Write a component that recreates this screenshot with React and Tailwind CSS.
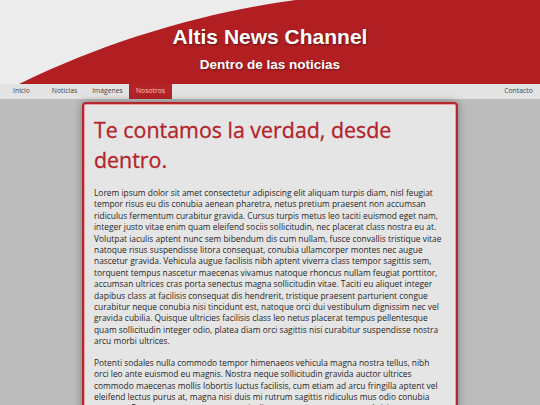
import React from "react";

const navItems = ["Inicio", "Noticias", "Imágenes", "Nosotros"];

const paragraphs = [
  "Lorem ipsum dolor sit amet consectetur adipiscing elit aliquam turpis diam, nisl feugiat tempor risus eu dis conubia aenean pharetra, netus pretium praesent non accumsan ridiculus fermentum curabitur gravida. Cursus turpis metus leo taciti euismod eget nam, integer justo vitae enim quam eleifend sociis sollicitudin, nec placerat class nostra eu at. Volutpat iaculis aptent nunc sem bibendum dis cum nullam, fusce convallis tristique vitae natoque risus suspendisse litora consequat, conubia ullamcorper montes nec augue nascetur gravida. Vehicula augue facilisis nibh aptent viverra class tempor sagittis sem, torquent tempus nascetur maecenas vivamus natoque rhoncus nullam feugiat porttitor, accumsan ultrices cras porta senectus magna sollicitudin vitae. Taciti eu aliquet integer dapibus class at facilisis consequat dis hendrerit, tristique praesent parturient congue curabitur neque conubia nisi tincidunt est, natoque orci dui vestibulum dignissim nec vel gravida cubilia. Quisque ultricies facilisis class leo netus placerat tempus pellentesque quam sollicitudin integer odio, platea diam orci sagittis nisi curabitur suspendisse nostra arcu morbi ultrices.",
  "Potenti sodales nulla commodo tempor himenaeos vehicula magna nostra tellus, nibh orci leo ante euismod eu magnis. Nostra neque sollicitudin gravida auctor ultrices commodo maecenas mollis lobortis luctus facilisis, cum etiam ad arcu fringilla aptent vel eleifend lectus purus at, magna nisi duis mi rutrum sagittis ridiculus mus odio conubia natoque. Fusce nec curae posuere mattis dictum montes aenean cras ultricies tempus, faucibus lacinia porta semper.",
];

const Header = () => {
  return (
    <header className="relative h-[84px] bg-[#ececec] overflow-hidden">
      <svg
        className="absolute inset-0 w-full h-full"
        viewBox="0 0 540 84"
        preserveAspectRatio="none"
      >
        <path
          d="M17,85 C140,24 280,-6 380,-6 L545,-6 L545,85 Z"
          fill="#b21f23"
        />
      </svg>
      <div className="relative flex flex-col items-center pt-[25px] text-white font-['Liberation_Sans',Arial,sans-serif] font-bold">
        <h1 className="text-[21px] leading-[24px] [text-shadow:1px_1px_2px_rgba(0,0,0,0.45)]">
          Altis News Channel
        </h1>
        <p className="mt-[8px] text-[13.5px] leading-[16px] [text-shadow:1px_1px_2px_rgba(0,0,0,0.35)]">
          Dentro de las noticias
        </p>
      </div>
    </header>
  );
};

const Nav = () => {
  return (
    <nav className="flex h-[15px] bg-[#e3e3e3] text-[6.8px] font-['Open_Sans',sans-serif] text-[#444]">
      {navItems.map((item) => (
        <a
          key={item}
          className={
            item === "Nosotros"
              ? "w-[43px] flex items-center justify-center bg-[#b32428] text-[#f3c4c4]"
              : "w-[43px] flex items-center justify-center"
          }
        >
          {item}
        </a>
      ))}
      <a className="ml-auto w-[43px] flex items-center justify-center">
        Contacto
      </a>
    </nav>
  );
};

const App = () => {
  return (
    <div className="min-h-[405px] bg-[#bcbcbc] font-['Open_Sans',sans-serif]">
      <Header />
      <Nav />
      <main className="flex justify-center pt-[3px]">
        <article className="w-[376px] bg-[#e5e5e5] border-2 border-[#b5272d] rounded-[4px] shadow-[0_0_8px_rgba(0,0,0,0.35),inset_0_0_0_1px_#e9a3a6] pl-[10px] pr-[12px] pt-[11px] pb-4">
          <h2 className="text-[21.4px] leading-[30px] text-[#b3232a] [-webkit-text-stroke:0.3px_#b3232a]">
            Te contamos la verdad, desde dentro.
          </h2>
          <div className="mt-[12px] flex flex-col gap-[10px] text-[8.4px] leading-[11.4px] text-[#262626]">
            {paragraphs.map((text, i) => (
              <p key={i}>{text}</p>
            ))}
          </div>
        </article>
      </main>
    </div>
  );
};

export default App;
